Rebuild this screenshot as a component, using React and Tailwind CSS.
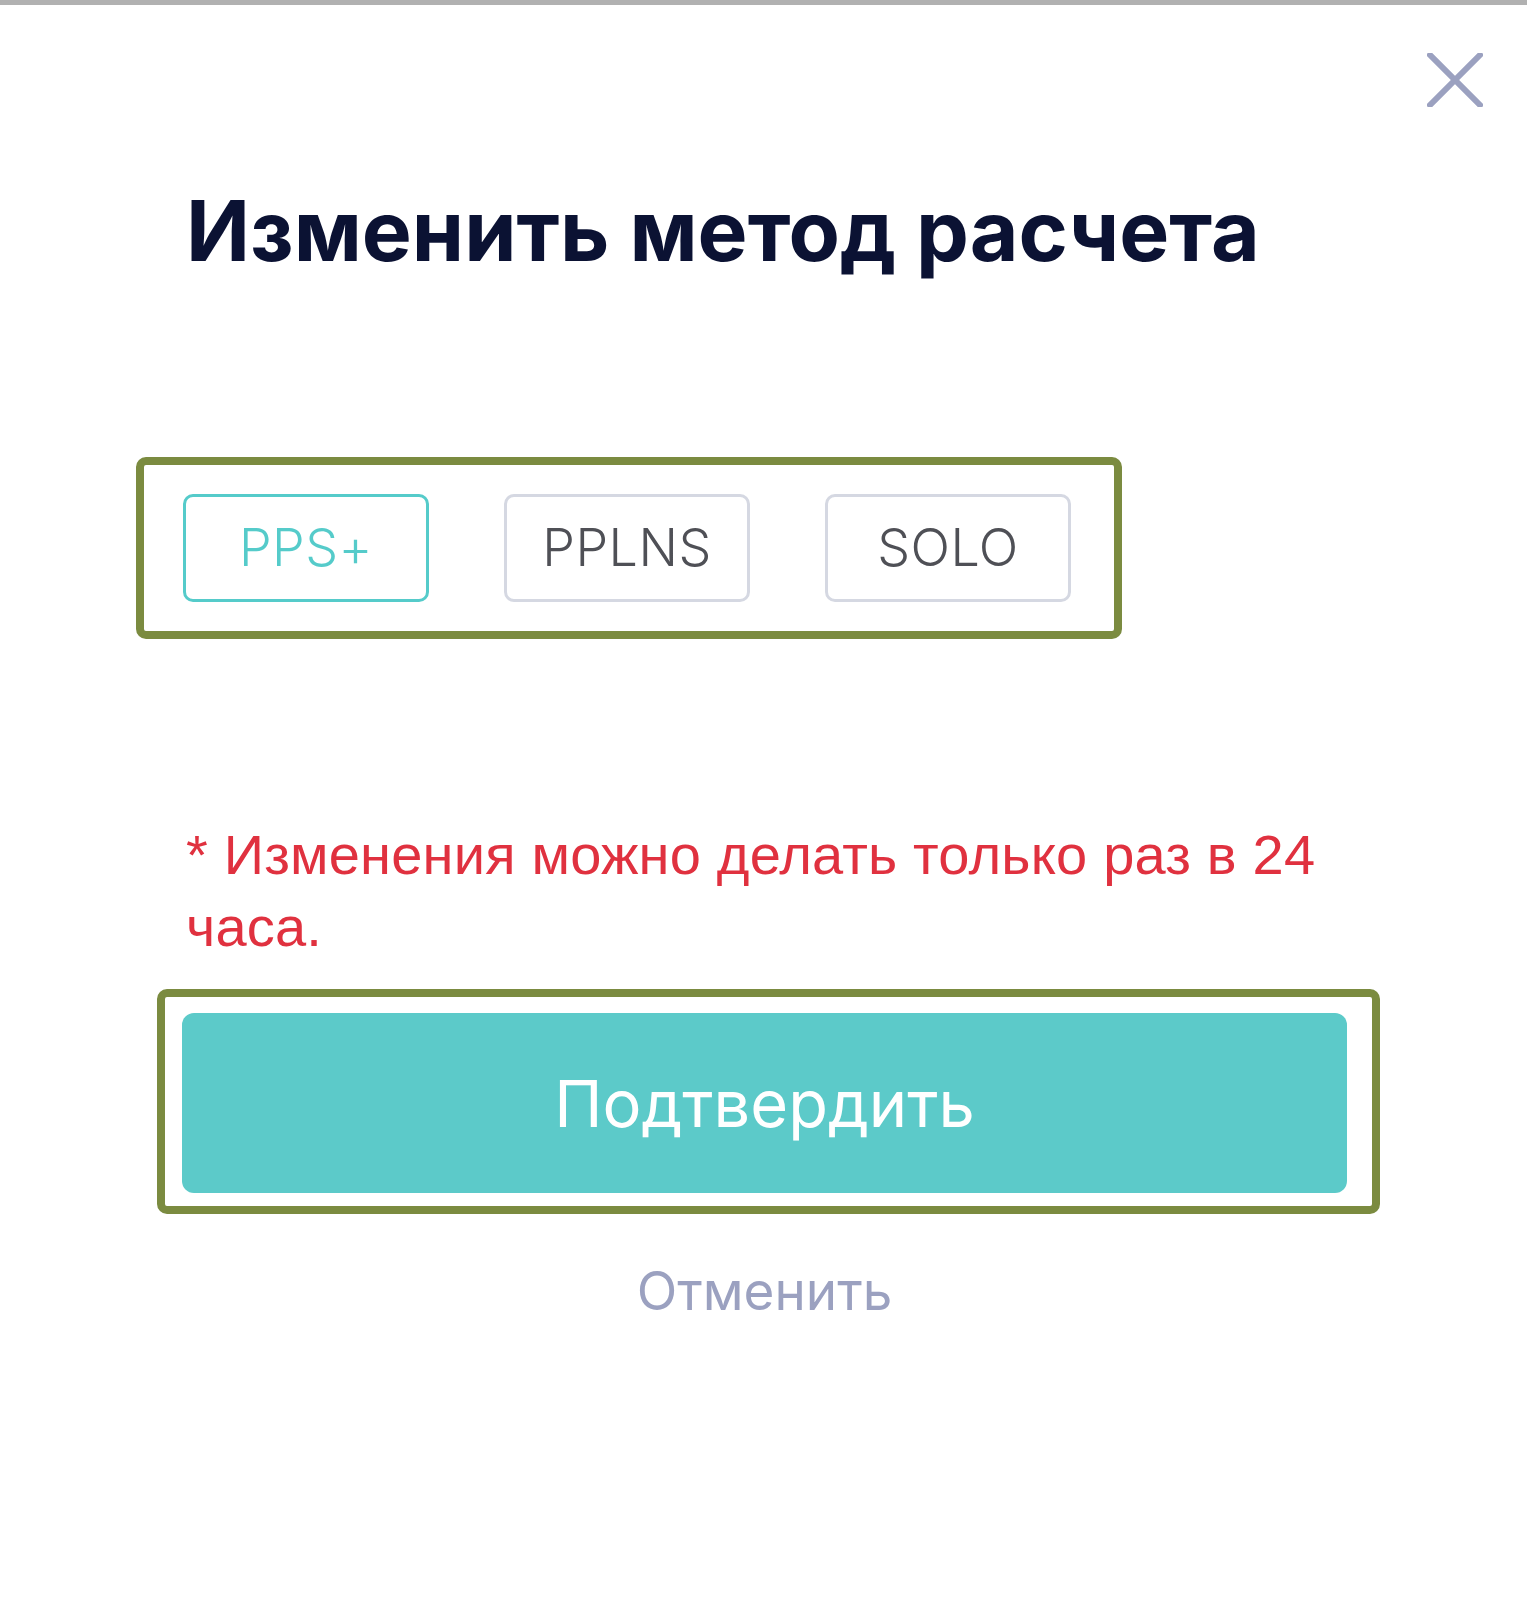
import { useState } from 'react';

const methods = ['PPS+', 'PPLNS', 'SOLO'];

export default function App() {
  const [active, setActive] = useState('PPS+');

  return (
    <div className="relative min-h-[1600px] bg-white border-t-[5px] border-[#b1b1b1] font-['Inter','Liberation_Sans',sans-serif]">
      {/* close */}
      <button className="absolute right-[44px] top-[48px] w-[56px] h-[54px] flex items-center justify-center">
        <svg width="56" height="54" viewBox="0 0 56 54" fill="none">
          <path d="M3 2 L53 52 M53 2 L3 52" stroke="#9ba1c0" strokeWidth="6" strokeLinecap="round" />
        </svg>
      </button>

      <div className="pl-[186px] pt-[180px]">
        <h1 className="text-[84px] font-bold leading-[1.1] text-[#0b1233]">
          Изменить метод расчета
        </h1>
      </div>

      {/* method picker */}
      <div className="ml-[136px] mt-[180px] w-[986px] h-[182px] border-[8px] border-[#7b8b40] rounded-[10px] flex items-center gap-[75px] pl-[39px]">
        {methods.map((m) => (
          <button
            key={m}
            onClick={() => setActive(m)}
            className={
              m === active
                ? 'w-[246px] h-[108px] rounded-[10px] border-[3px] border-[#55cbca] text-[#55cbca] text-[52px] font-light tracking-[0.5px]'
                : 'w-[246px] h-[108px] rounded-[10px] border-[3px] border-[#d5d8e2] text-[#4f5056] text-[52px] font-light tracking-[0.5px]'
            }
          >
            {m}
          </button>
        ))}
      </div>

      <p className="ml-[186px] mt-[180px] w-[1180px] font-['Liberation_Sans',sans-serif] text-[56px] leading-[72px] text-[#e0313f] tracking-[0.2px]">
        * Изменения можно делать только раз в 24 часа.
      </p>

      {/* confirm */}
      <div className="ml-[157px] mt-[26px] w-[1223px] h-[225px] border-[8px] border-[#7b8b40] rounded-[10px] pl-[17px] pt-[16px]">
        <button className="w-[1165px] h-[180px] rounded-[12px] bg-[#5ccac9] text-white text-[65px]">
          Подтвердить
        </button>
      </div>

      <div className="w-[1165px] ml-[182px] mt-[38px] text-center">
        <button className="text-[53px] text-[#9ba1c0]">Отменить</button>
      </div>
    </div>
  );
}
